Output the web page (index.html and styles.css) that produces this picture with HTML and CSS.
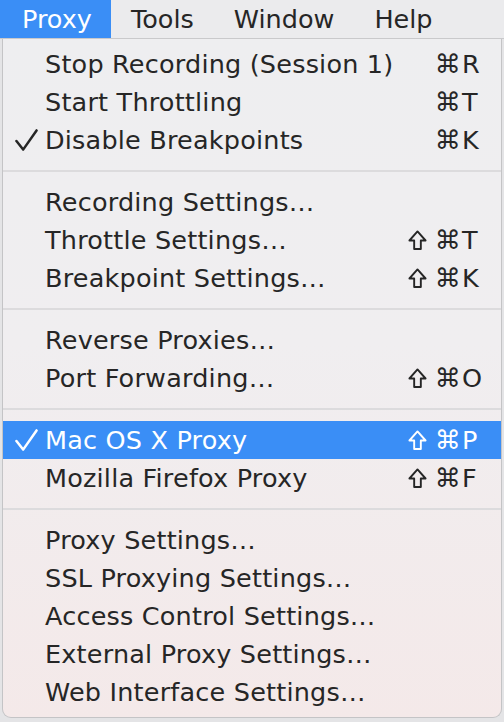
FILE: index.html
```html
<!DOCTYPE html>
<html>
<head>
<meta charset="utf-8">
<link rel="stylesheet" href="styles.css">
</head>
<body>
<div class="screen">
  <div class="menubar">
    <span class="mb-item active">Proxy</span>
    <span class="mb-item">Tools</span>
    <span class="mb-item">Window</span>
    <span class="mb-item">Help</span>
  </div>
  <div class="menu">
    <div class="row"><span class="check"></span><span class="label">Stop Recording (Session 1)</span><span class="mods"><span class="cmd">⌘</span></span><span class="key">R</span></div>
    <div class="row"><span class="check"></span><span class="label">Start Throttling</span><span class="mods"><span class="cmd">⌘</span></span><span class="key">T</span></div>
    <div class="row"><span class="check"><svg class="tick" viewBox="0 0 24 24"><path d="M1.5 12.5 L8.5 21.5 L22.5 1.5"/></svg></span><span class="label">Disable Breakpoints</span><span class="mods"><span class="cmd">⌘</span></span><span class="key">K</span></div>
    <div class="sep"></div>
    <div class="row"><span class="check"></span><span class="label">Recording Settings…</span><span class="mods"></span><span class="key"></span></div>
    <div class="row"><span class="check"></span><span class="label">Throttle Settings…</span><span class="mods"><svg class="shift" viewBox="0 0 20 22"><path d="M10 1.5 L18.5 11 L13.5 11 L13.5 20 L6.5 20 L6.5 11 L1.5 11 Z"/></svg><span class="cmd">⌘</span></span><span class="key">T</span></div>
    <div class="row"><span class="check"></span><span class="label">Breakpoint Settings…</span><span class="mods"><svg class="shift" viewBox="0 0 20 22"><path d="M10 1.5 L18.5 11 L13.5 11 L13.5 20 L6.5 20 L6.5 11 L1.5 11 Z"/></svg><span class="cmd">⌘</span></span><span class="key">K</span></div>
    <div class="sep"></div>
    <div class="row"><span class="check"></span><span class="label">Reverse Proxies…</span><span class="mods"></span><span class="key"></span></div>
    <div class="row"><span class="check"></span><span class="label">Port Forwarding…</span><span class="mods"><svg class="shift" viewBox="0 0 20 22"><path d="M10 1.5 L18.5 11 L13.5 11 L13.5 20 L6.5 20 L6.5 11 L1.5 11 Z"/></svg><span class="cmd">⌘</span></span><span class="key">O</span></div>
    <div class="sep"></div>
    <div class="row selected"><span class="check"><svg class="tick" viewBox="0 0 24 24"><path d="M1.5 12.5 L8.5 21.5 L22.5 1.5"/></svg></span><span class="label">Mac OS X Proxy</span><span class="mods"><svg class="shift" viewBox="0 0 20 22"><path d="M10 1.5 L18.5 11 L13.5 11 L13.5 20 L6.5 20 L6.5 11 L1.5 11 Z"/></svg><span class="cmd">⌘</span></span><span class="key">P</span></div>
    <div class="row"><span class="check"></span><span class="label">Mozilla Firefox Proxy</span><span class="mods"><svg class="shift" viewBox="0 0 20 22"><path d="M10 1.5 L18.5 11 L13.5 11 L13.5 20 L6.5 20 L6.5 11 L1.5 11 Z"/></svg><span class="cmd">⌘</span></span><span class="key">F</span></div>
    <div class="sep"></div>
    <div class="row"><span class="check"></span><span class="label">Proxy Settings…</span><span class="mods"></span><span class="key"></span></div>
    <div class="row"><span class="check"></span><span class="label">SSL Proxying Settings…</span><span class="mods"></span><span class="key"></span></div>
    <div class="row"><span class="check"></span><span class="label">Access Control Settings…</span><span class="mods"></span><span class="key"></span></div>
    <div class="row"><span class="check"></span><span class="label">External Proxy Settings…</span><span class="mods"></span><span class="key"></span></div>
    <div class="row"><span class="check"></span><span class="label">Web Interface Settings…</span><span class="mods"></span><span class="key"></span></div>
  </div>
</div>
</body>
</html>
```

FILE: styles.css
```css
html, body {
  margin: 0;
  padding: 0;
}
body {
  width: 504px;
  height: 722px;
  overflow: hidden;
  background: #e4e4e6;
  font-family: "DejaVu Sans", "Liberation Sans", sans-serif;
  color: #262626;
}
.screen {
  display: flex;
  flex-direction: column;
  height: 722px;
}
.menubar {
  height: 39px;
  background: #ebebed;
  border-bottom: 1px solid #c9c9cb;
  display: flex;
  align-items: stretch;
  font-size: 25.5px;
  box-sizing: border-box;
}
.mb-item {
  display: flex;
  align-items: center;
  padding: 0 20px;
  color: #262626;
}
.mb-item.active {
  background: #3a8ef6;
  color: #ffffff;
  width: 111px;
  padding-left: 22px;
  box-sizing: border-box;
}
.menu {
  margin-left: 2px;
  width: 500px;
  box-sizing: border-box;
  border: 1px solid #c4c4c6;
  border-top: none;
  border-radius: 0 0 9px 9px;
  background: linear-gradient(180deg, #eeeef0 0%, #f0eef0 45%, #f4e9e9 100%);
  padding: 6px 0 6px 0;
  font-size: 25.5px;
  letter-spacing: 0.2px;
}
.row {
  display: grid;
  grid-template-columns: 42px 1fr auto 40px;
  align-items: center;
  height: 38px;
}
.check {
  display: flex;
  align-items: center;
  padding-left: 12px;
}
.tick {
  width: 23px;
  height: 23px;
  fill: none;
  stroke: currentColor;
  stroke-width: 2.6;
  stroke-linecap: round;
  stroke-linejoin: round;
}
.mods {
  display: flex;
  align-items: center;
  justify-content: flex-end;
  gap: 8px;
}
.shift {
  width: 19px;
  height: 21px;
  fill: none;
  stroke: currentColor;
  stroke-width: 2;
  stroke-linejoin: round;
}
.cmd {
  font-size: 26px;
}
.key {
  text-align: left;
  padding-left: 1px;
}
.row.selected {
  background: #3a8ef6;
  color: #ffffff;
}
.sep {
  height: 24px;
  display: flex;
  align-items: center;
}
.sep::before {
  content: "";
  display: block;
  width: 100%;
  height: 2px;
  background: #dcdbdd;
}
```
